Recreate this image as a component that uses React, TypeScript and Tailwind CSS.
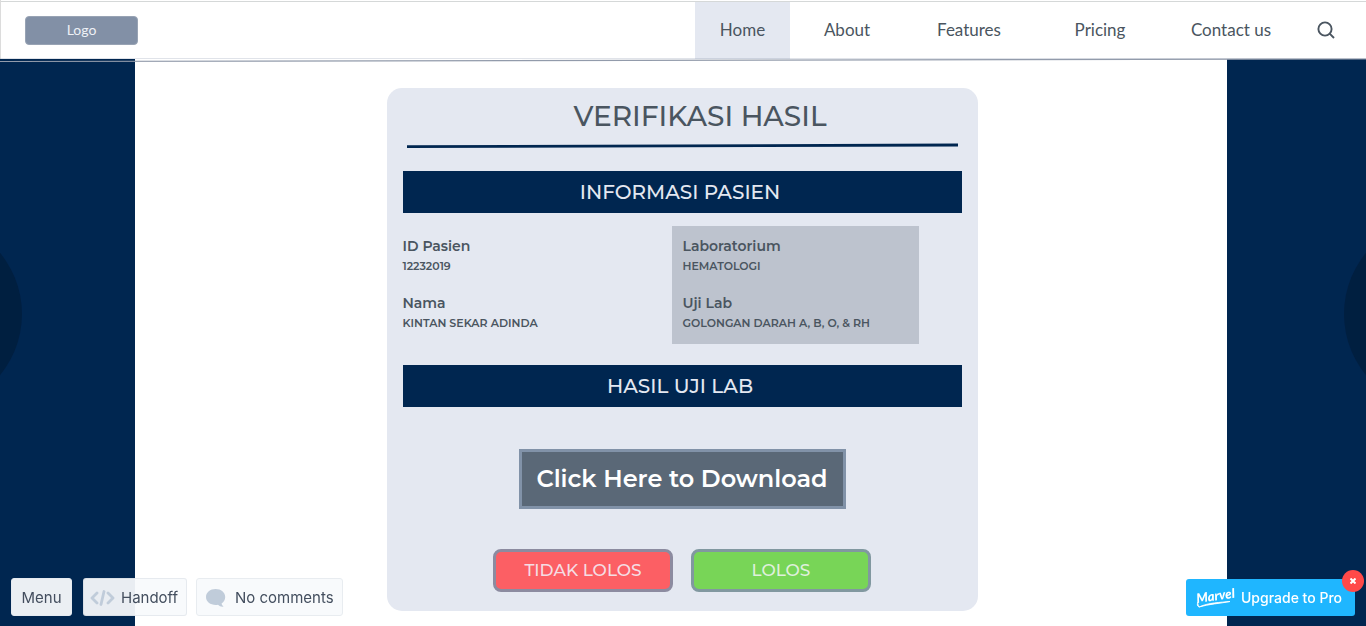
import React from "react";

const links = [
  { label: "Home", cell: "w-[95px] bg-[#e4e8f1]" },
  { label: "About", cell: "w-[114px]" },
  { label: "Features", cell: "w-[130px]" },
  { label: "Pricing", cell: "w-[132px]" },
  { label: "Contact us", cell: "w-[130px]" },
];

function Field({ label, value }: { label: string; value: string }) {
  return (
    <div>
      <dt className="text-[14px] leading-5 font-semibold">{label}</dt>
      <dd className="text-[11px] leading-5 font-semibold">{value}</dd>
    </div>
  );
}

function Bar({ children }: { children: React.ReactNode }) {
  return (
    <h2 className="flex h-[42px] items-center justify-center bg-[#002650] pr-1 text-[20px] font-medium text-[#e4e8f1]">
      {children}
    </h2>
  );
}

function Header() {
  return (
    <header className="relative flex h-[59px] items-stretch justify-between border-l border-[#dcdcdc] bg-white pt-px font-[Lato,sans-serif]">
      <div className="flex flex-1 items-start justify-between border-t border-[#d5d8d8]">
        <a
          href="#"
          className="mt-[14px] ml-6 flex h-[29px] w-[113px] items-center justify-center rounded-[4px] border border-[#98a3b4] bg-[#8290a6] pb-[3px] text-[14px] text-[#eef1f6]"
        >
          Logo
        </a>
        <nav className="flex self-stretch text-[17px] text-[#4a5560]">
          {links.map((l) => (
            <a key={l.label} href="#" className={`flex items-center justify-center pb-[2px] ${l.cell}`}>
              {l.label}
            </a>
          ))}
          <button type="button" aria-label="Search" className="flex w-[70px] items-center justify-center pr-[10px] pb-[2px]">
            <svg width="20" height="20" viewBox="0 0 20 20" fill="none" stroke="#4a5560" strokeWidth="1.9">
              <circle cx="9" cy="9" r="6.6" />
              <path d="M13.7 13.7 L18 18" />
            </svg>
          </button>
        </nav>
      </div>
      <svg
        className="absolute top-[57px] -left-px h-[6px] w-screen"
        viewBox="0 0 1366 6"
        preserveAspectRatio="none"
        aria-hidden="true"
      >
        <path d="M0 1.5 H1366" stroke="#8290a6" strokeOpacity="0.25" strokeWidth="1" />
        <path d="M0 4.5 L1366 2" stroke="#929bab" strokeWidth="1.2" />
      </svg>
    </header>
  );
}

export default function App() {
  return (
    <div className="relative flex min-h-screen flex-col overflow-hidden bg-white font-[Montserrat,Inter,sans-serif] text-[#4a5560]">
      <Header />
      <main className="flex flex-1">
        <div className="w-[135px] shrink-0 bg-[#002650]" />
        <div className="flex flex-1 justify-center pt-[29px] pb-4 pl-[2px]">
          <section className="flex w-[591px] flex-col rounded-[15px] bg-[#e4e8f1] px-4 pb-[19px]">
            <h1 className="pt-2 pl-9 text-center text-[28px] leading-10 font-medium">VERIFIKASI HASIL</h1>
            <svg
              className="mt-[6px] h-[8px] w-full px-1"
              viewBox="0 0 552 8"
              preserveAspectRatio="none"
              aria-hidden="true"
            >
              <path d="M0 4.7 L552 3" stroke="#002650" strokeWidth="2.8" />
            </svg>
            <div className="mt-[21px]">
              <Bar>INFORMASI PASIEN</Bar>
            </div>
            <div className="mt-[13px] flex justify-between pr-[43px]">
              <dl className="flex flex-col gap-[17px] py-[10px]">
                <Field label="ID Pasien" value="12232019" />
                <Field label="Nama" value="KINTAN SEKAR ADINDA" />
              </dl>
              <dl className="flex h-[118px] w-[247px] flex-col gap-[17px] bg-[#bdc3ce] px-[11px] py-[10px]">
                <Field label="Laboratorium" value="HEMATOLOGI" />
                <Field label="Uji Lab" value="GOLONGAN DARAH A, B, O, & RH" />
              </dl>
            </div>
            <div className="mt-[21px]">
              <Bar>HASIL UJI LAB</Bar>
            </div>
            <button
              type="button"
              className="mt-[42px] flex h-[60px] w-[327px] items-center justify-center self-center border-3 border-[#8192a8] bg-[#5a6877] text-[24px] font-semibold text-white"
            >
              Click Here to Download
            </button>
            <div className="mt-10 flex justify-center gap-[18px] text-[17px] font-medium">
              <button type="button" className="h-[43px] w-[180px] rounded-[8px] border-3 border-[#8c8ba0] bg-[#fc5f64] text-[#f5dde3]">
                TIDAK LOLOS
              </button>
              <button type="button" className="h-[43px] w-[180px] rounded-[8px] border-3 border-[#8198a0] bg-[#78d557] text-[#dff0dc]">
                LOLOS
              </button>
            </div>
          </section>
        </div>
        <div className="w-[139px] shrink-0 bg-[#002650]" />
      </main>

      <div className="absolute top-[218px] -left-[170px] size-[192px] rounded-full bg-[#001f40]" />
      <div className="absolute top-[218px] -right-[170px] size-[192px] rounded-full bg-[#001f40]" />

      <div className="fixed inset-x-[11px] bottom-[10px] flex items-end justify-between font-[Inter,sans-serif] text-[15px] text-[#434e5e]">
        <div className="flex">
          <button type="button" className="h-[38px] w-[61px] rounded-[3px] border border-[#e5eaf0] bg-[#f8fafc]/95 pt-[2px]">
            Menu
          </button>
          <button
            type="button"
            className="ml-[11px] flex h-[38px] w-[104px] items-center gap-[6px] rounded-[3px] border border-[#8290a6]/15 bg-[#f8fafc]/94 pt-[2px] pl-[6px]"
          >
            <svg width="25" height="16" viewBox="0 0 25 16" fill="none" stroke="#c0ccda" strokeWidth="2.8" strokeLinecap="round" strokeLinejoin="round">
              <path d="M7 3 L2 8 L7 13 M18 3 L23 8 L18 13 M14 1.5 L11 14.5" />
            </svg>
            Handoff
          </button>
          <button
            type="button"
            className="ml-[9px] flex h-[38px] w-[147px] items-center gap-[9px] rounded-[3px] border border-[#e8ecf0] bg-[#f8fafc] pt-[2px] pl-[9px]"
          >
            <svg width="20" height="18" viewBox="0 0 20 18" fill="#c0ccda">
              <path d="M9.6 0 C15 0 19.2 3.4 19.2 8 C19.2 10.8 17.8 13 15.6 14.4 C15.8 15.8 16.6 16.8 17.8 17.6 C15.6 18 13.4 17.4 12 15.8 C5.4 16.8 0 13.2 0 8 C0 3.4 4.2 0 9.6 0 Z" />
            </svg>
            No comments
          </button>
        </div>
        <div className="relative">
          <a href="#" className="flex h-[37px] w-[169px] items-center gap-px rounded-[3px] bg-[#1fb6ff] pl-2 text-[14px] font-medium text-white">
            <svg width="46" height="30" viewBox="0 0 46 30" role="img" aria-label="Marvel">
              <text x="3" y="20" transform="rotate(-8 3 20)" fill="#fff" fontFamily="Lato, sans-serif" fontStyle="italic" fontWeight="900" fontSize="13">
                Marvel
              </text>
              <path d="M5 24 C3 23 3 21 4 19 M5 24 C15 19.5 26 19.5 36 18.5 C26 20.5 15 21 5 24 Z" fill="#fff" stroke="#fff" strokeWidth="0.9" />
            </svg>
            Upgrade to Pro
          </a>
          <button
            type="button"
            aria-label="Close"
            className="absolute -top-[9px] -right-[9px] flex size-[22px] items-center justify-center rounded-full bg-[#ff4949]"
          >
            <svg width="6" height="6" viewBox="0 0 6 6" stroke="#fff" strokeWidth="2">
              <path d="M0.5 0.5 L5.5 5.5 M5.5 0.5 L0.5 5.5" />
            </svg>
          </button>
        </div>
      </div>
    </div>
  );
}
